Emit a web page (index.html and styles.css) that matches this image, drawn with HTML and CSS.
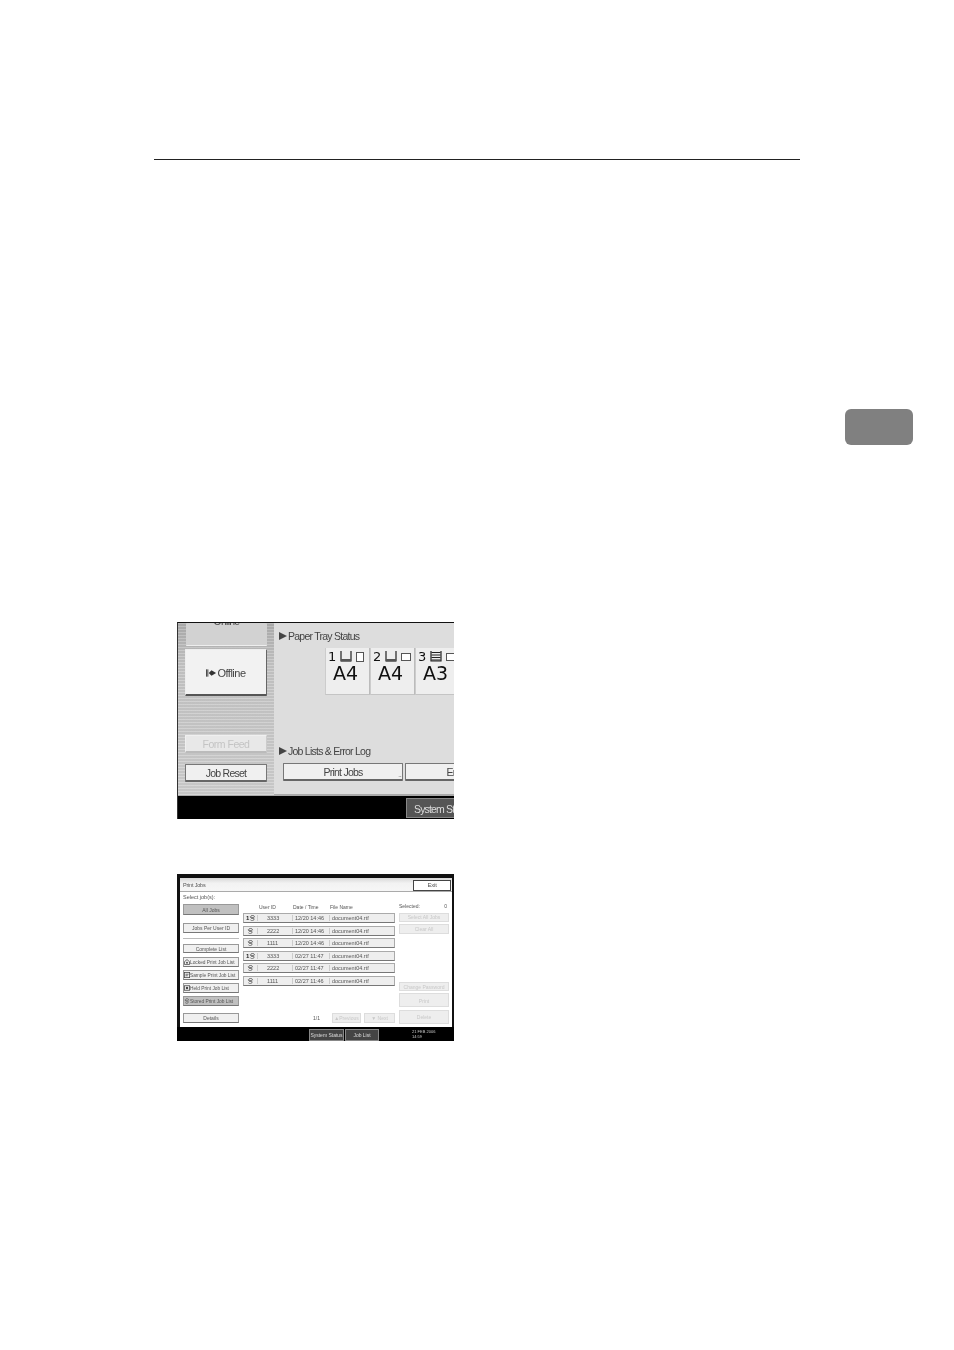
FILE: index.html
```html
<!DOCTYPE html>
<html lang="en">
<head>
<meta charset="utf-8">
<title>Print Jobs</title>
<link rel="stylesheet" href="styles.css">
</head>
<body>
<svg class="defs" width="0" height="0" aria-hidden="true">
  <symbol id="tri" viewBox="0 0 10 10"><path d="M0 0L10 5L0 10Z" fill="#444"/></symbol>
  <symbol id="tray" viewBox="0 0 12 11"><path d="M1 0V10H11V0" fill="none" stroke="#222" stroke-width="1.2"/><rect x="1" y="8" width="10" height="2.4" fill="#555"/></symbol>
  <symbol id="trayfull" viewBox="0 0 12 11"><path d="M1 0V10H11V0" fill="none" stroke="#222" stroke-width="1.2"/><path d="M1.5 1.5H10.5M1.5 4H10.5M1.5 6.5H10.5M1.5 9H10.5" stroke="#222" stroke-width="1"/></symbol>
  <symbol id="job" viewBox="0 0 10 8"><path d="M2.5 1.5A3 3 0 0 1 8 3M2 6.5A3 3 0 0 0 7.5 5" fill="none" stroke="#444" stroke-width="1"/><path d="M3 3H7V5H3Z M1 2L4 2L2 4Z" fill="#555"/></symbol>
  <symbol id="lock" viewBox="0 0 8 8"><path d="M4 .8L7.4 3.6V7.4H.6V3.6Z" fill="none" stroke="#444"/><circle cx="4" cy="5" r="1.2" fill="#444"/></symbol>
  <symbol id="sample" viewBox="0 0 8 8"><rect x=".5" y=".5" width="7" height="7" fill="none" stroke="#444"/><path d="M2 3H6M2 5H5" stroke="#444"/></symbol>
  <symbol id="held" viewBox="0 0 8 8"><rect x=".5" y="1" width="7" height="6" fill="none" stroke="#444"/><circle cx="4" cy="4" r="1.6" fill="#444"/></symbol>
</svg>

<header class="rule"></header>
<aside class="tab"></aside>

<section class="screen one">
  <div class="main">
    <div class="side">
      <div class="btn online"><span>Online</span></div>
      <div class="btn offline">
        <svg class="off-icon" viewBox="0 0 12 8"><path d="M.5 0V8M2 0V8" stroke="#333"/><path d="M3 4L6 1V7ZM6 1L11 4L6 7Z" fill="#333"/></svg>Offline
      </div>
      <div class="btn feed">Form Feed</div>
      <div class="btn reset">Job Reset</div>
    </div>
    <div class="content">
      <h2 class="head first"><svg class="tri"><use href="#tri"/></svg>Paper Tray Status</h2>
      <div class="trays">
        <div class="tile">
          <div class="tile-top"><span>1</span><svg class="tray"><use href="#tray"/></svg><i class="paper tall"></i></div>
          <div class="size">A4</div>
        </div>
        <div class="tile">
          <div class="tile-top"><span>2</span><svg class="tray"><use href="#tray"/></svg><i class="paper wide"></i></div>
          <div class="size">A4</div>
        </div>
        <div class="tile">
          <div class="tile-top"><span>3</span><svg class="tray"><use href="#trayfull"/></svg><i class="paper wide"></i></div>
          <div class="size">A3</div>
        </div>
      </div>
      <h2 class="head second"><svg class="tri"><use href="#tri"/></svg>Job Lists &amp; Error Log</h2>
      <div class="lists">
        <div class="btn print">Print Jobs<span class="dots">...</span></div>
        <div class="btn error">Error Log</div>
      </div>
    </div>
  </div>
  <div class="foot"><div class="sys">System Status</div></div>
</section>

<section class="screen two">
  <div class="panel">
    <div class="title"><span>Print Jobs</span><div class="b exit">Exit</div></div>
    <div class="cols">
      <div class="left">
        <div class="lbl">Select job(s):</div>
        <div class="b on all">All Jobs</div>
        <div class="b per">Jobs Per User ID</div>
        <hr class="sep">
        <div class="b complete">Complete List</div>
        <div class="b li"><svg class="ic"><use href="#lock"/></svg>Locked Print Job List</div>
        <div class="b li"><svg class="ic"><use href="#sample"/></svg>Sample Print Job List</div>
        <div class="b li"><svg class="ic"><use href="#held"/></svg>Held Print Job List</div>
        <div class="b li on"><svg class="ic"><use href="#job"/></svg>Stored Print Job List</div>
        <div class="b details">Details</div>
      </div>
      <div class="mid">
        <div class="thead"><span class="c1">User ID</span><span class="c2">Date / Time</span><span class="c3">File Name</span></div>
        <div class="row"><span class="c0"><b>1</b><svg class="ic"><use href="#job"/></svg></span><span class="c1">3333</span><span class="c2">12/20 14:46</span><span class="c3">document04.rtf</span></div>
        <div class="row"><span class="c0 solo"><svg class="ic"><use href="#job"/></svg></span><span class="c1">2222</span><span class="c2">12/20 14:46</span><span class="c3">document04.rtf</span></div>
        <div class="row"><span class="c0 solo"><svg class="ic"><use href="#job"/></svg></span><span class="c1">1111</span><span class="c2">12/20 14:46</span><span class="c3">document04.rtf</span></div>
        <div class="row"><span class="c0"><b>1</b><svg class="ic"><use href="#job"/></svg></span><span class="c1">3333</span><span class="c2">02/27 11:47</span><span class="c3">document04.rtf</span></div>
        <div class="row"><span class="c0 solo"><svg class="ic"><use href="#job"/></svg></span><span class="c1">2222</span><span class="c2">02/27 11:47</span><span class="c3">document04.rtf</span></div>
        <div class="row"><span class="c0 solo"><svg class="ic"><use href="#job"/></svg></span><span class="c1">1111</span><span class="c2">02/27 11:46</span><span class="c3">document04.rtf</span></div>
        <div class="pager">
          <span class="count">1/1</span>
          <div class="b off prev">▲Previous</div>
          <div class="b off next">▼ Next</div>
        </div>
      </div>
      <div class="right">
        <div class="sel"><span>Selected:</span><span>0</span></div>
        <div class="b off r1">Select All Jobs</div>
        <div class="b off r2">Clear All</div>
        <div class="b off r3">Change Password</div>
        <div class="b off r4">Print</div>
        <div class="b off r5">Delete</div>
      </div>
    </div>
  </div>
  <div class="bar">
    <div class="tabbtn t1">System Status</div>
    <div class="tabbtn t2">Job List</div>
    <div class="clock">21 FEB 2006<br>14:59</div>
  </div>
</section>
</body>
</html>
```
FILE: styles.css
```css
* { box-sizing: border-box; }
html, body { margin: 0; padding: 0; background: #fff; }
body {
  position: relative;
  width: 954px;
  height: 1350px;
  overflow: hidden;
  font-family: "Liberation Sans", Arial, sans-serif;
  color: #333;
  padding-top: 159px;
}
.defs { position: absolute; }
.rule { height: 1px; margin: 0 154px; background: #222; }
.tab {
  position: absolute;
  left: 845px;
  top: 409px;
  width: 68px;
  height: 36px;
  border-radius: 6px;
  background: #808080;
}
.screen { overflow: hidden; filter: blur(.35px); }

/* Screen one */
.one {
  width: 277px;
  height: 197px;
  margin: 462px 0 0 177px;
  display: flex;
  flex-direction: column;
  background: #000;
  border-top: 1px solid #111;
  border-left: 1px solid #333;
}
.main { height: 173px; display: flex; background: #ddd; }
.side {
  width: 96px;
  flex: none;
  padding: 0 7px 0 7px;
  background:
    repeating-linear-gradient(180deg, rgba(255,255,255,.16) 0 1px, rgba(0,0,0,.04) 1px 3px),
    linear-gradient(180deg, #aeaeae 0, #c6c6c6 25%, #cfcfcf 100%);
  border-bottom: 1px solid #aaa;
}
.btn {
  display: flex;
  align-items: center;
  justify-content: center;
  background: #f0f0f0;
  border: 1px solid #777;
  border-bottom: 2px solid #666;
  border-radius: 1px;
  font-size: 10.5px;
  letter-spacing: -.75px;
  padding-top: 1px;
  color: #444;
}
.online {
  height: 23px;
  margin: 0 0 3px 1px;
  background: #d2d2d2;
  border: 0;
  border-bottom: 1px solid #eee;
  align-items: flex-start;
  overflow: hidden;
}
.online span { margin-top: -9px; }
.offline {
  height: 47px;
  background: #f2f2f2;
  border-color: #eee #666 #555 #eee;
  font-size: 11px;
  letter-spacing: -.5px;
}
.off-icon { width: 11px; height: 8px; }
.feed {
  height: 18px;
  margin-top: 39px;
  background: #e8e8e8;
  border-color: #f0f0f0 #ccc #bbb #f0f0f0;
  color: #c4c4c4;
  letter-spacing: -.5px;
}
.reset { height: 18px; margin-top: 11px; }
.content { flex: 1; min-width: 0; border-bottom: 2px solid #aaa; padding-left: 5px; }
.head {
  margin: 0;
  display: flex;
  align-items: center;
  height: 12px;
  font-size: 10.5px;
  letter-spacing: -.75px;
  font-weight: 400;
  color: #444;
}
.tri { width: 8px; height: 8px; margin-right: 1px; }
.head.first { margin-top: 7px; }
.trays { display: flex; margin: 6px 0 0 46px; width: 140px; }
.tile {
  flex: none;
  width: 45px;
  height: 47px;
  background: #eee;
  border-right: 1px solid #bbb;
  border-bottom: 1px solid #c4c4c4;
  border-left: 1px solid #ccc;
  padding: 3px 0 0 2px;
  overflow: hidden;
}
.tile-top {
  display: flex;
  align-items: center;
  gap: 4px;
  height: 11px;
  font-family: "DejaVu Sans", sans-serif;
  font-size: 13px;
  color: #111;
}
.tray { width: 12px; height: 11px; }
.paper { flex: none; display: block; border: 1px solid #555; background: #fff; }
.paper.tall { width: 8px; height: 10px; }
.paper.wide { width: 10px; height: 8px; }
.size {
  margin-top: 2px;
  padding-left: 5px;
  line-height: 18px;
  font-family: "DejaVu Sans", sans-serif;
  font-size: 19px;
  color: #111;
}
.head.second { margin-top: 50px; }
.lists { display: flex; gap: 2px; margin: 6px 0 0 4px; }
.print { position: relative; flex: none; width: 120px; height: 18px; }
.dots { position: absolute; right: 1px; bottom: 1px; font-size: 6px; line-height: 5px; }
.error { flex: none; width: 120px; height: 18px; }
.foot { flex: 1; background: #000; padding: 2px 0 0 228px; }
.sys {
  width: 90px;
  height: 20px;
  background: #555;
  border: 1px solid #888;
  color: #ddd;
  font-size: 10.5px;
  letter-spacing: -.85px;
  line-height: 20px;
  padding-left: 7px;
  white-space: nowrap;
}

/* Screen two */
.two {
  width: 277px;
  height: 167px;
  margin-top: 55px;
  margin-left: 177px;
  background: #111;
  padding-top: 4px;
  display: flex;
  flex-direction: column;
  color: #555;
}
.panel {
  height: 149px;
  margin: 0 2px 0 3px;
  background: #fff;
  display: flex;
  flex-direction: column;
  font-size: 5px;
  color: #555;
}
.title {
  flex: none;
  height: 14px;
  padding: 1px 1px 0 3px;
  display: flex;
  align-items: center;
  justify-content: space-between;
  background: linear-gradient(180deg, #d8d8d8 0, #f2f2f2 40%, #f6f6f6 100%);
  border-bottom: 1px solid #aaa;
  font-size: 5.5px;
  letter-spacing: -.2px;
}
.b {
  display: flex;
  align-items: center;
  justify-content: center;
  flex: none;
  background: #f0f0f0;
  border: 1px solid #999;
  border-bottom: 1.5px solid #777;
  font-size: 5px;
  white-space: nowrap;
  overflow: hidden;
}
.exit { width: 38px; height: 11px; background: #fff; border-color: #444; font-size: 6px; }
.cols { flex: 1; display: flex; min-height: 0; padding-left: 3px; }
.left { width: 60px; flex: none; display: flex; flex-direction: column; }
.left .b { width: 56px; }
.lbl { height: 12px; line-height: 11px; font-size: 5.5px; }
.on { background: #c0c0c0; }
.all { height: 11px; }
.per { height: 10px; margin-top: 8px; }
.sep { width: 56px; margin: 5px 0 5px; border: 0; border-top: 1px solid #bbb; height: 0; }
.complete { height: 9px; }
.li { height: 10px; margin-top: 3px; justify-content: flex-start; font-size: 4.8px; }
.complete + .li { margin-top: 4px; }
.ic { width: 6px; height: 6px; flex: none; }
.details { height: 10px; margin-top: 7px; }
.mid { width: 152px; flex: none; display: flex; flex-direction: column; }
.thead { height: 21px; padding-top: 11px; display: flex; font-size: 5px; line-height: 8px; }
.thead .c1 { margin-left: 16px; width: 34px; }
.thead .c2 { width: 37px; }
.row {
  height: 10px;
  margin-bottom: 2.5px;
  flex: none;
  display: flex;
  align-items: center;
  background: #eee;
  border: 1px solid #aaa;
  border-bottom: 1.5px solid #777;
  font-size: 5.5px;
}
.row span { display: flex; align-items: center; }
.c0 { width: 14px; padding-left: 2px; border-right: 1px solid #ccc; height: 6px; }
.c0.solo { padding-left: 3px; }
.c0 .ic { width: 7px; }
.c0 b { font-size: 6px; color: #222; }
.row .c1 { width: 34px; padding-left: 9px; }
.row .c2 { width: 37px; padding-left: 2px; border-left: 1px solid #ccc; }
.row .c3 { padding-left: 2px; border-left: 1px solid #ccc; }
.pager { display: flex; align-items: center; margin-top: 25px; padding-left: 70px; }
.count { width: 19px; }
.off { color: #c8c8c8; background: #eee; border-color: #ddd; }
.prev { width: 29px; height: 10px; }
.next { width: 31px; height: 10px; margin-left: 3px; }
.right { width: 50px; flex: none; margin-left: 4px; display: flex; flex-direction: column; }
.sel { height: 21px; padding-top: 11px; display: flex; justify-content: space-between; line-height: 7px; padding-right: 2px; }
.r1 { height: 9px; padding-bottom: 2px; }
.r2 { height: 10px; margin-top: 2px; }
.r3 { height: 9px; margin-top: 48px; }
.r4 { height: 14px; margin-top: 2px; padding-top: 2px; }
.r5 { height: 14px; margin-top: 3px; }
.bar { flex: 1; display: flex; align-items: flex-start; padding: 2px 0 0 132px; background: #000; }
.tabbtn {
  height: 12px;
  background: #444;
  border: 1px solid #888;
  color: #ddd;
  font-size: 5px;
  line-height: 10px;
  text-align: center;
}
.t1 { width: 35px; }
.t2 { width: 34px; margin-left: 1px; }
.clock { margin-left: 33px; color: #ccc; font-size: 4px; line-height: 5px; }
```
